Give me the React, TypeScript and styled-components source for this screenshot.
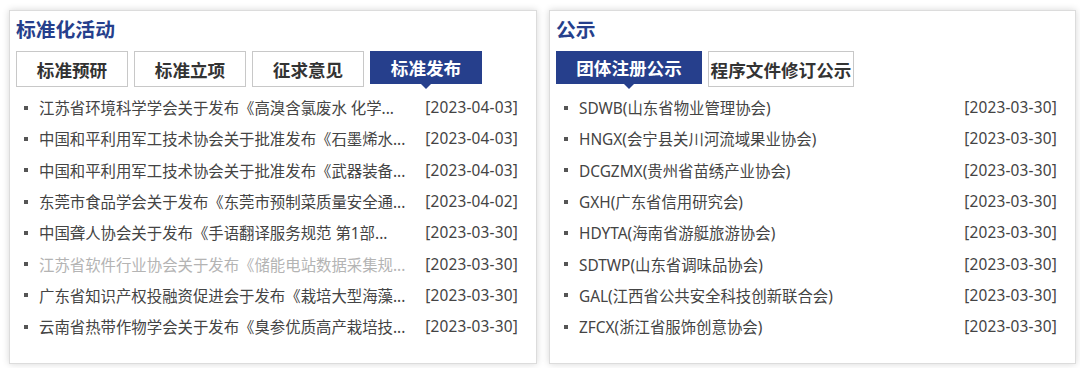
import React from "react";
import styled, { createGlobalStyle } from "styled-components";

const GlobalStyle = createGlobalStyle`
  body {
    margin: 0;
    background: #fff;
    font-family: "Noto Sans", "Noto Sans CJK SC", sans-serif;
  }
`;

const Page = styled.div`
  display: flex;
  gap: 12px;
  padding: 10px 4px 4px 9px;
`;

const Panel = styled.section<{ $width: number }>`
  box-sizing: border-box;
  width: ${({ $width }) => $width}px;
  height: 354px;
  background: #fff;
  border: 1px solid #dcdcdc;
  box-shadow: 0 0 7px rgba(0, 0, 0, 0.16);
  padding: 4px 18px 0 6px;
`;

const Title = styled.h2`
  margin: 0;
  font-size: 19.8px;
  line-height: 28px;
  font-weight: 700;
  color: #263f8c;
  font-family: "Noto Sans CJK SC", sans-serif;
`;

const Tabs = styled.div`
  display: flex;
  gap: 6px;
  margin-top: 8px;
  height: 39px;
`;

const Tab = styled.div<{ $active?: boolean; $width: number }>`
  position: relative;
  box-sizing: border-box;
  width: ${({ $width }) => $width}px;
  height: ${({ $active }) => ($active ? 33 : 36)}px;
  display: flex;
  align-items: center;
  justify-content: center;
  white-space: nowrap;
  font-family: "Noto Sans CJK SC", sans-serif;
  font-size: 17.6px;
  font-weight: 700;
  color: ${({ $active }) => ($active ? "#fff" : "#333")};
  background: ${({ $active }) => ($active ? "#263f8c" : "#fff")};
  border: 1px solid ${({ $active }) => ($active ? "#263f8c" : "#c8c8c8")};

  &::after {
    content: "";
    display: ${({ $active }) => ($active ? "block" : "none")};
    position: absolute;
    left: 50%;
    top: 100%;
    margin-left: -6px;
    border-left: 6px solid transparent;
    border-right: 6px solid transparent;
    border-top: 6px solid #263f8c;
  }
`;

const List = styled.ul`
  list-style: none;
  margin: 2px 0 0;
  padding: 0;
`;

const Row = styled.li<{ $faded?: boolean }>`
  display: flex;
  align-items: center;
  height: 31.3px;
  font-size: 15.4px;
  color: ${({ $faded }) => ($faded ? "#b4b4b4" : "#444")};
`;

const Bullet = styled.span`
  width: 4px;
  height: 4px;
  background: #555;
  margin: 0 11px 0 8px;
  flex: none;
`;

const Label = styled.span`
  flex: 1;
  white-space: nowrap;
  overflow: hidden;
`;

const DateText = styled.span`
  flex: none;
  color: #444;
  letter-spacing: 0.2px;
`;

const activities = [
  { t: "江苏省环境科学学会关于发布《高溴含氯废水 化学...", d: "2023-04-03" },
  { t: "中国和平利用军工技术协会关于批准发布《石墨烯水...", d: "2023-04-03" },
  { t: "中国和平利用军工技术协会关于批准发布《武器装备...", d: "2023-04-03" },
  { t: "东莞市食品学会关于发布《东莞市预制菜质量安全通...", d: "2023-04-02" },
  { t: "中国聋人协会关于发布《手语翻译服务规范 第1部...", d: "2023-03-30" },
  { t: "江苏省软件行业协会关于发布《储能电站数据采集规...", d: "2023-03-30", faded: true },
  { t: "广东省知识产权投融资促进会于发布《栽培大型海藻...", d: "2023-03-30" },
  { t: "云南省热带作物学会关于发布《臭参优质高产栽培技...", d: "2023-03-30" },
];

const notices = [
  { t: "SDWB(山东省物业管理协会)", d: "2023-03-30" },
  { t: "HNGX(会宁县关川河流域果业协会)", d: "2023-03-30" },
  { t: "DCGZMX(贵州省苗绣产业协会)", d: "2023-03-30" },
  { t: "GXH(广东省信用研究会)", d: "2023-03-30" },
  { t: "HDYTA(海南省游艇旅游协会)", d: "2023-03-30" },
  { t: "SDTWP(山东省调味品协会)", d: "2023-03-30" },
  { t: "GAL(江西省公共安全科技创新联合会)", d: "2023-03-30" },
  { t: "ZFCX(浙江省服饰创意协会)", d: "2023-03-30" },
];

type Item = { t: string; d: string; faded?: boolean };

function NewsList({ items }: { items: Item[] }) {
  return (
    <List>
      {items.map((it, i) => (
        <Row key={i} $faded={it.faded}>
          <Bullet />
          <Label>{it.t}</Label>
          <DateText>[{it.d}]</DateText>
        </Row>
      ))}
    </List>
  );
}

export default function App() {
  return (
    <>
      <GlobalStyle />
      <Page>
        <Panel $width={528}>
          <Title>标准化活动</Title>
          <Tabs>
            <Tab $width={112}>标准预研</Tab>
            <Tab $width={112}>标准立项</Tab>
            <Tab $width={112}>征求意见</Tab>
            <Tab $width={112} $active>
              标准发布
            </Tab>
          </Tabs>
          <NewsList items={activities} />
        </Panel>
        <Panel $width={527}>
          <Title>公示</Title>
          <Tabs>
            <Tab $width={146} $active>
              团体注册公示
            </Tab>
            <Tab $width={146}>程序文件修订公示</Tab>
          </Tabs>
          <NewsList items={notices} />
        </Panel>
      </Page>
    </>
  );
}
